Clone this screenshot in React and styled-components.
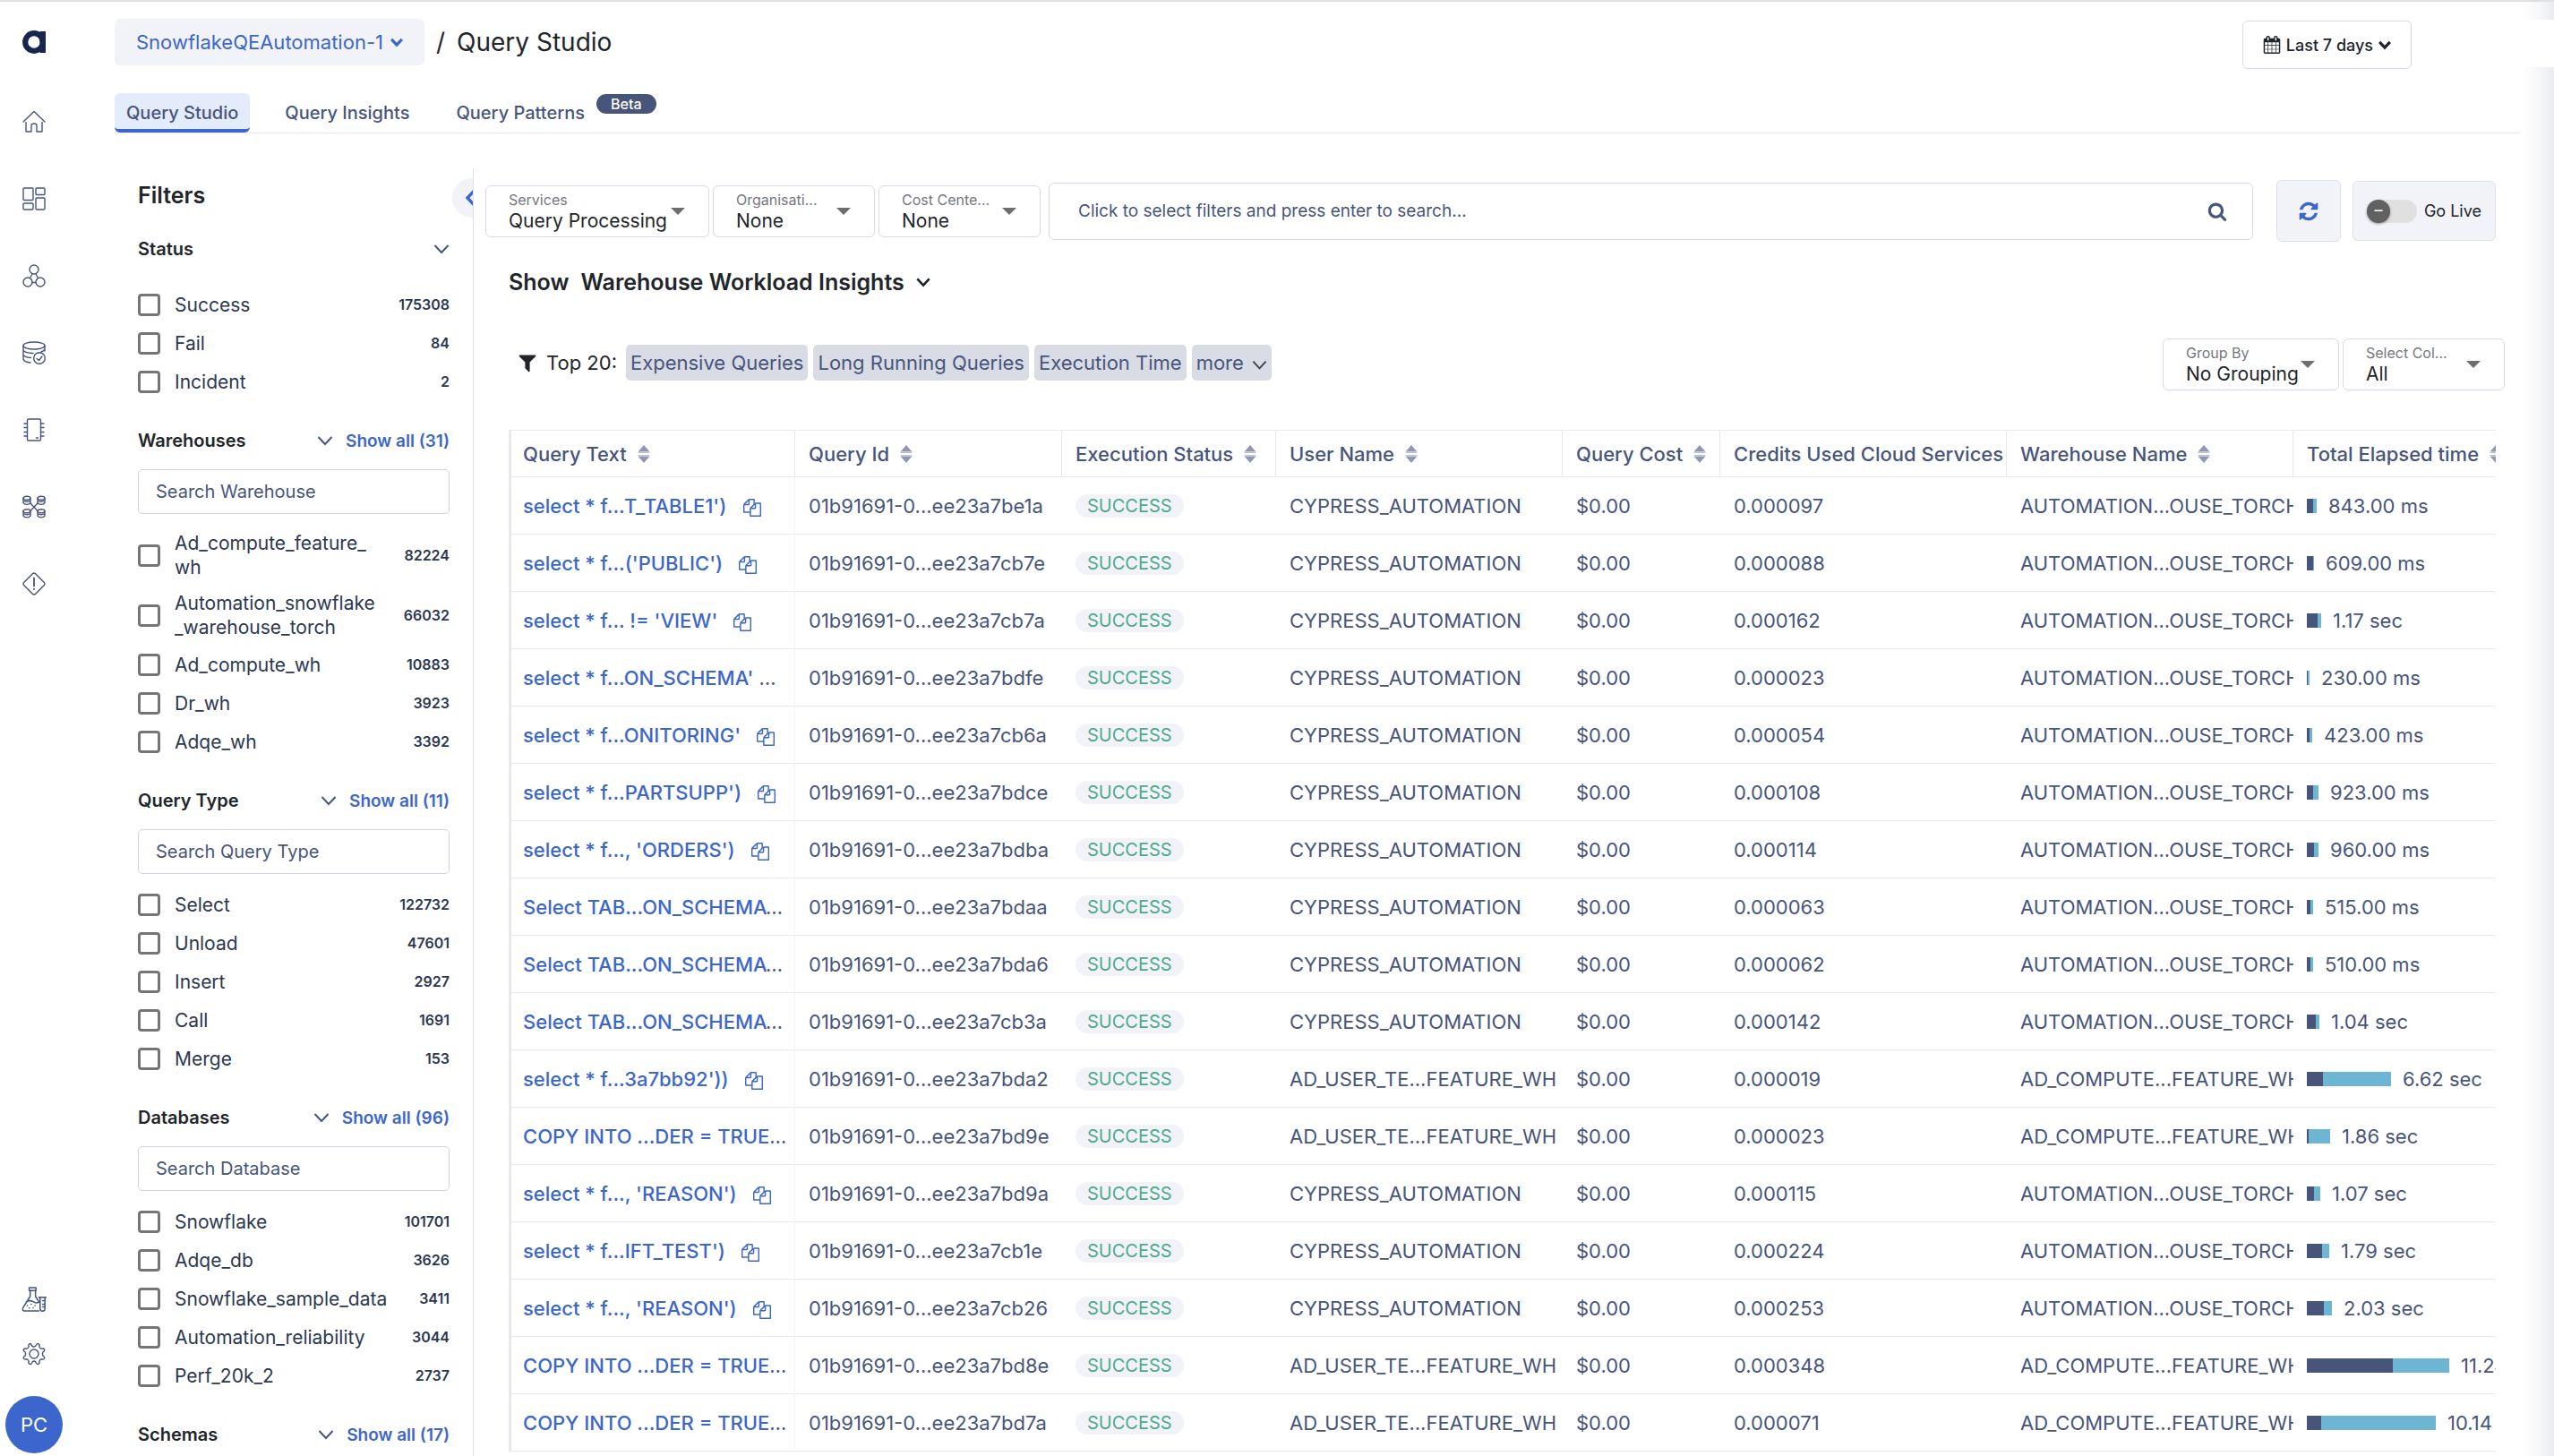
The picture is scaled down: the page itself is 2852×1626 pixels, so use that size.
import React, { useState } from 'react';
import styled, { createGlobalStyle } from 'styled-components';

const colors = {
  text: '#212529',
  slate: '#47557b',
  label: '#2c3750',
  blue: '#3c66cb',
  border: '#d8dae5',
  line: '#e8e9ef',
  panel: '#f2f3f8',
  chip: '#d9dbe5',
  green: '#4fa98b',
  sky: '#6cb5d3',
};

const GlobalStyle = createGlobalStyle`
  * {
    box-sizing: border-box;
  }

  body {
    margin: 0;
    background: #fff;
    color: ${colors.text};
    font-family: Inter, 'Liberation Sans', sans-serif;
    font-size: 22px;
  }

  button, input, select {
    font: inherit;
    color: inherit;
    margin: 0;
  }

  button {
    cursor: pointer;
  }
`;

const Page = styled.div`
  position: relative;
  display: flex;
  height: 100vh;
  overflow: hidden;
  border-top: 2px solid #e0e0e0;
`;

const EdgeShade = styled.div`
  position: absolute;
  top: 0;
  right: 0;
  bottom: 0;
  width: 36px;
  pointer-events: none;
  background:
    linear-gradient(#fff, #fff) 0 20px / 100% 53px no-repeat,
    linear-gradient(to right, #fff, #f8f8fa 50%, #e9ebee);
`;

/* Sidebar */

const Sidebar = styled.nav`
  display: flex;
  flex-direction: column;
  align-items: center;
  flex: none;
  width: 76px;
  padding: 32px 0 3px;
`;

const SideLink = styled.a`
  display: flex;
  flex: none;
  color: ${colors.slate};
  margin-bottom: ${props => props.$gap || 60}px;
`;

const SideSpacer = styled.div`
  flex: 1;
`;

const Avatar = styled.button`
  flex: none;
  width: 64px;
  height: 64px;
  border: none;
  border-radius: 50%;
  background: ${colors.blue};
  color: #fff;
  font-size: 22px;
  padding: 0;
`;

/* Header */

const Main = styled.main`
  display: flex;
  flex-direction: column;
  flex: 1;
  min-width: 0;
  padding: 0 39px 0 52px;
`;

const Header = styled.header`
  display: flex;
  align-items: flex-start;
  justify-content: space-between;
  height: 102px;
  padding: 19px 120px 0 0;
`;

const Crumbs = styled.div`
  display: flex;
  align-items: center;
  gap: 13px;
  font-size: 28px;
`;

const SourceButton = styled.button`
  display: flex;
  align-items: center;
  gap: 8px;
  height: 52px;
  padding: 0 24px;
  border: none;
  border-radius: 6px;
  background: ${colors.panel};
  color: ${colors.blue};
  font-size: 22px;
`;

const PageTitle = styled.h1`
  margin: 0;
  font-size: 28px;
  font-weight: 400;
`;

const DateButton = styled.button`
  display: flex;
  align-items: center;
  gap: 6px;
  height: 54px;
  margin-top: 2px;
  padding: 0 22px;
  border: 1px solid ${colors.border};
  border-radius: 6px;
  background: #fff;
  font-size: 18px;
  font-weight: 500;
`;

const Tabs = styled.nav`
  display: flex;
  flex: none;
  gap: 26px;
  border-bottom: 1px solid ${colors.line};
`;

const Tab = styled.a`
  display: flex;
  align-items: center;
  gap: 13px;
  height: 44px;
  padding: 4px 13px 0;
  border-radius: 6px;
  border-bottom: 4px solid ${props => (props.$active ? colors.blue : 'transparent')};
  background: ${props => (props.$active ? '#e4ebfb' : 'transparent')};
  color: ${colors.slate};
  font-size: 20px;
  font-weight: 500;
  text-decoration: none;
`;

const Beta = styled.span`
  align-self: flex-start;
  margin-top: -3px;
  padding: 0 16px;
  border-radius: 11px;
  background: ${colors.slate};
  color: #fff;
  font-size: 16px;
  line-height: 22px;
`;

const Body = styled.div`
  display: flex;
  flex: 1;
  min-height: 0;
  margin-top: 39px;
`;

/* Filters */

const FilterPanel = styled.aside`
  position: relative;
  flex: none;
  width: 401px;
  padding: 15px 26px 0;
  border-right: 1px solid #dcdee4;
  overflow: hidden;
`;

const CollapseButton = styled.button`
  position: absolute;
  top: 11px;
  right: 0;
  display: flex;
  align-items: center;
  width: 23px;
  height: 44px;
  padding: 0 0 0 12px;
  border: none;
  border-radius: 22px 0 0 22px;
  background: ${colors.panel};
  color: ${colors.blue};
  overflow: hidden;

  svg {
    flex: none;
  }
`;

const FilterTitle = styled.h2`
  margin: 0 0 30px;
  font-size: 25px;
  font-weight: 600;
  line-height: 30px;
`;

const FilterGroup = styled.section`
  margin-bottom: 36px;
`;

const GroupHeader = styled.div`
  display: flex;
  align-items: center;
  gap: 14px;
  height: 30px;

  h3 {
    flex: 1;
    margin: 0;
    font-size: 20px;
    font-weight: 600;
  }
`;

const IconButton = styled.button`
  display: flex;
  padding: 0;
  border: none;
  background: none;
  color: ${colors.slate};
`;

const ShowAll = styled.a`
  color: ${colors.blue};
  font-size: 19px;
  font-weight: 600;
  text-decoration: none;
`;

const FilterSearch = styled.input`
  display: block;
  width: 100%;
  height: 50px;
  margin-top: 17px;
  padding: 0 19px;
  border: 1px solid #cfd3dc;
  border-radius: 5px;
  font-size: 20px;

  &::placeholder {
    color: ${colors.slate};
    opacity: 1;
  }
`;

const OptionList = styled.div`
  display: flex;
  flex-direction: column;
  gap: 13px;
  margin-top: ${props => (props.$plain ? 32 : 19)}px;
`;

const Option = styled.label`
  display: flex;
  align-items: center;
  min-height: 30px;
  color: ${colors.label};
  font-size: 21px;
  line-height: 27px;
  cursor: pointer;
`;

const OptionName = styled.span`
  flex: 1;
  margin: 0 24px 0 16px;
  overflow-wrap: anywhere;
`;

const OptionCount = styled.span`
  font-size: 16px;
  font-weight: 600;
`;

const Checkbox = styled.input.attrs({ type: 'checkbox' })`
  appearance: none;
  flex: none;
  width: 25px;
  height: 25px;
  border: 3px solid #757575;
  border-radius: 4px;
  background: #fff;

  &:checked {
    background: ${colors.blue};
    border-color: ${colors.blue};
  }
`;

/* Content */

const Content = styled.div`
  flex: 1;
  min-width: 0;
  padding: 13px 16px 0 13px;
`;

const Toolbar = styled.div`
  display: flex;
  align-items: center;
  gap: 4px;
  margin-right: 10px;
`;

const FieldBox = styled.div`
  display: flex;
  align-items: center;
  flex: none;
  width: ${props => props.$width}px;
  height: 58px;
  padding: 0 26px 0 25px;
  border: 1px solid ${colors.border};
  border-radius: 6px;
  background: #fff;
`;

const FieldText = styled.div`
  display: flex;
  flex-direction: column;
  flex: 1;
  min-width: 0;

  label {
    color: #75777c;
    font-size: 16px;
    line-height: 22px;
  }

  select {
    width: 100%;
    padding: 0;
    border: none;
    background: none;
    appearance: none;
    color: ${colors.text};
    font-size: 21px;
    line-height: 26px;
  }
`;

const Caret = styled.span`
  flex: none;
  border: 8px solid transparent;
  border-top-color: #6e6e6e;
  border-bottom: none;
`;

const SearchBox = styled.div`
  display: flex;
  align-items: center;
  flex: 1;
  height: 64px;
  margin: 0 22px 0 5px;
  padding: 0 28px 0 32px;
  border: 1px solid ${colors.border};
  border-radius: 6px;

  input {
    flex: 1;
    min-width: 0;
    padding: 0;
    border: none;
    outline: none;
    background: none;
    font-size: 19px;
  }

  input::placeholder {
    color: ${colors.slate};
    opacity: 1;
  }
`;

const RefreshButton = styled.button`
  display: flex;
  align-items: center;
  justify-content: center;
  width: 72px;
  height: 69px;
  margin-right: 9px;
  border: 1px solid #dfe2ea;
  border-radius: 6px;
  background: ${colors.panel};
  color: ${colors.blue};
`;

const LiveToggle = styled.label`
  display: flex;
  align-items: center;
  justify-content: space-between;
  width: 160px;
  height: 67px;
  padding: 0 15px;
  border: 1px solid #dfe2ea;
  border-radius: 6px;
  background: ${colors.panel};
  font-size: 18px;
  cursor: pointer;
`;

const Switch = styled.input.attrs({ type: 'checkbox', role: 'switch' })`
  appearance: none;
  display: flex;
  align-items: center;
  width: 56px;
  height: 26px;
  margin: 0;
  border-radius: 13px;
  background: #e0e0e0;

  &::before {
    content: '–';
    width: 26px;
    height: 26px;
    border-radius: 50%;
    background: #616161;
    box-shadow: 0 1px 3px rgba(0, 0, 0, 0.4);
    color: #fff;
    line-height: 24px;
    text-align: center;
  }

  &:checked {
    justify-content: flex-end;
  }
`;

const InsightsTitle = styled.h2`
  display: flex;
  align-items: center;
  gap: 13px;
  height: 36px;
  margin: 27px 0 0 26px;
  font-size: 25px;
  font-weight: 600;

  button {
    display: flex;
    align-items: center;
    gap: 13px;
    padding: 0;
    border: none;
    background: none;
  }
`;

const QuickRow = styled.div`
  display: flex;
  align-items: center;
  justify-content: space-between;
  height: 58px;
  margin: 45px 0 44px 26px;
`;

const QuickFilters = styled.div`
  display: flex;
  align-items: center;
  gap: 6px;
  padding: 0 0 4px 9px;
`;

const QuickLabel = styled.span`
  display: flex;
  align-items: center;
  gap: 9px;
  margin-right: 4px;
`;

const Chip = styled.button`
  display: flex;
  align-items: center;
  gap: 9px;
  height: 40px;
  padding: 0 5px;
  border: none;
  border-radius: 5px;
  background: ${colors.chip};
  color: ${colors.slate};
  font-size: 22px;

  svg {
    color: #3b4153;
    margin-top: 4px;
  }
`;

const FieldPair = styled.div`
  display: flex;
  gap: 4px;
`;

/* Table */

const TableWrap = styled.div`
  margin: 0 10px 0 26px;
  overflow: hidden;
`;

const Table = styled.table`
  width: 2313px;
  table-layout: fixed;
  border-collapse: separate;
  border-spacing: 0;
  border-left: 3px solid ${colors.line};
  color: ${colors.slate};
`;

const Th = styled.th`
  height: 53px;
  padding: 0 0 0 15px;
  border-top: 1px solid ${colors.line};
  border-bottom: 1px solid ${colors.line};
  border-right: 1px solid ${colors.line};
  font-size: 22px;
  font-weight: 500;
  text-align: left;
  white-space: nowrap;
  overflow: hidden;

  &:first-child {
    padding-left: 13px;
  }
`;

const ThInner = styled.div`
  display: flex;
  align-items: center;
  gap: 12px;

  svg {
    flex: none;
  }
`;

const Td = styled.td`
  height: 64px;
  padding: 0 0 0 15px;
  border-bottom: 1px solid ${colors.line};
  font-size: 22px;
  white-space: nowrap;
  overflow: hidden;
`;

const QueryTd = styled(Td)`
  padding: 0 8px 0 13px;
  border-right: 1px solid #f4f4f8;
  text-overflow: ellipsis;

  a {
    color: ${colors.blue};
    font-weight: 500;
    text-decoration: none;
  }
`;

const CopyButton = styled.button`
  display: inline-flex;
  margin-left: 12px;
  padding: 0;
  border: none;
  background: none;
  color: ${colors.blue};
  vertical-align: middle;
`;

const Badge = styled.span`
  display: inline-block;
  padding: 0 13px;
  border-radius: 13px;
  background: ${colors.panel};
  color: ${colors.green};
  font-size: 20px;
  line-height: 26px;
`;

const Elapsed = styled.div`
  display: flex;
  align-items: center;
`;

const Segment = styled.span`
  flex: none;
  height: 16px;
  background: ${props => props.$color};
`;

const ElapsedText = styled.span`
  margin-left: 13px;
`;

/* Icons */

const Glyph = ({ d, size }) => (
  <svg width={size} height={size} viewBox="0 0 1792 1792" fill="currentColor" aria-hidden="true">
    <path d={d} />
  </svg>
);

const glyphs = {
  copy: 'M1696 384q40 0 68 28t28 68v1216q0 40-28 68t-68 28h-960q-40 0-68-28t-28-68v-288h-544q-40 0-68-28t-28-68v-672q0-40 20-88t48-76l408-408q28-28 76-48t88-20h416q40 0 68 28t28 68v328q68-40 128-40h416zm-544 213l-299 299h299v-299zm-640-384l-299 299h299v-299zm196 647l316-316v-416h-384v416q0 40-28 68t-68 28h-416v640h512v-256q0-40 20-88t48-76zm956 804v-1152h-384v416q0 40-28 68t-68 28h-416v640h896z',
  refresh: 'M1639 1056q0 5-1 7-64 268-268 434.5t-478 166.5q-146 0-282.5-55t-243.5-157l-129 129q-19 19-45 19t-45-19-19-45v-448q0-26 19-45t45-19h448q26 0 45 19t19 45-19 45l-137 137q71 66 161 102t187 36q134 0 250-65t186-179q11-17 53-117 8-23 30-23h192q13 0 22.5 9.5t9.5 22.5zm25-800v448q0 26-19 45t-45 19h-448q-26 0-45-19t-19-45 19-45l138-138q-148-137-349-137-134 0-250 65t-186 179q-11 17-53 117-8 23-30 23h-199q-13 0-22.5-9.5t-9.5-22.5v-7q65-268 270-434.5t480-166.5q146 0 284 55.5t245 156.5l130-129q19-19 45-19t45 19 19 45z',
  calendar: 'M192 1664h288v-288h-288v288zm352 0h320v-288h-320v288zm-352-352h288v-320h-288v320zm352 0h320v-320h-320v320zm-352-384h288v-288h-288v288zm736 736h320v-288h-320v288zm-384-736h320v-288h-320v288zm768 736h288v-288h-288v288zm-384-352h320v-320h-320v320zm-352-864v-288q0-13-9.5-22.5t-22.5-9.5h-64q-13 0-22.5 9.5t-9.5 22.5v288q0 13 9.5 22.5t22.5 9.5h64q13 0 22.5-9.5t9.5-22.5zm736 864h288v-320h-288v320zm-384-384h320v-288h-320v288zm384 0h288v-288h-288v288zm32-480v-288q0-13-9.5-22.5t-22.5-9.5h-64q-13 0-22.5 9.5t-9.5 22.5v288q0 13 9.5 22.5t22.5 9.5h64q13 0 22.5-9.5t9.5-22.5zm384-64v1280q0 52-38 90t-90 38h-1408q-52 0-90-38t-38-90v-1280q0-52 38-90t90-38h128v-96q0-66 47-113t113-47h64q66 0 113 47t47 113v96h384v-96q0-66 47-113t113-47h64q66 0 113 47t47 113v96h128q52 0 90 38t38 90z',
  search: 'M1216 832q0-185-131.5-316.5t-316.5-131.5-316.5 131.5-131.5 316.5 131.5 316.5 316.5 131.5 316.5-131.5 131.5-316.5zm512 832q0 52-38 90t-90 38q-54 0-90-38l-343-342q-179 124-399 124-143 0-273.5-55.5t-225-150-150-225-55.5-273.5 55.5-273.5 150-225 225-150 273.5-55.5 273.5 55.5 225 150 150 225 55.5 273.5q0 220-124 399l343 343q37 37 37 90z',
  filter: 'M1595 295q17 41-14 70l-493 493v742q0 42-39 59-13 5-25 5-27 0-45-19l-256-256q-19-19-19-45v-486l-493-493q-31-29-14-70 17-39 59-39h1280q42 0 59 39z',
};

const Chevron = ({ width = 18, stroke = 2 }) => (
  <svg width={width} height={width} viewBox="0 0 18 18" fill="none" stroke="currentColor" strokeWidth={stroke} aria-hidden="true">
    <path d="M1.5 5 L9 13 L16.5 5" />
  </svg>
);

const SortIcon = () => (
  <svg width="14" height="20" viewBox="0 0 14 20" fill="#8f98b0" aria-hidden="true">
    <path d="M7 0 L13.5 7.5 H0.5 Z M7 20 L13.5 12.5 H0.5 Z" />
    <path d="M0.5 8 h13 v1 h-13 z M0.5 11 h13 v1 h-13 z" opacity="0.6" />
  </svg>
);

const SideIcon = ({ children, size = 26 }) => (
  <svg width={size} height={size} viewBox="0 0 26 26" fill="none" stroke="currentColor" strokeWidth="1.4" strokeLinejoin="round" strokeLinecap="round" aria-hidden="true">
    {children}
  </svg>
);

const Logo = () => (
  <svg width="26" height="26" viewBox="0 0 26 26" aria-hidden="true">
    <circle cx="13" cy="13" r="9.8" fill="none" stroke="#16264f" strokeWidth="6.2" />
    <path d="M19.5 1 H26 V25 H19.5 Z" fill="#16264f" />
  </svg>
);

const sideItems = [
  {
    name: 'Home',
    icon: (
      <SideIcon>
        <path d="M1 13 L13 1.5 L25 13 M4 13.5 V24 H10 V17 Q10 15 13 15 Q16 15 16 17 V24 H22 V13.5" />
      </SideIcon>
    ),
  },
  {
    name: 'Dashboards',
    icon: (
      <SideIcon>
        <rect x="1" y="1" width="11" height="13.5" rx="1" />
        <rect x="15" y="1" width="10" height="7.5" rx="1" />
        <rect x="1" y="18" width="11" height="7" rx="1" />
        <rect x="15" y="12" width="10" height="13" rx="1" />
      </SideIcon>
    ),
  },
  {
    name: 'Clusters',
    icon: (
      <SideIcon>
        <circle cx="13" cy="6" r="5" />
        <circle cx="6" cy="20" r="5" />
        <circle cx="20" cy="20" r="5" />
        <path d="M11 11 L8.5 15.5 M15 11 L17.5 15.5 M11 20.5 H15" />
      </SideIcon>
    ),
  },
  {
    name: 'Data quality',
    icon: (
      <SideIcon>
        <ellipse cx="13" cy="5" rx="12" ry="4" />
        <path d="M1 5 V20 Q2 23.5 9 24 M25 5 V11 M1 10 Q2 13 12 13.5 M1 15 Q2 18 9.5 18.5 M25 9 Q24 11 21 12" />
        <circle cx="19" cy="19" r="6.3" />
        <path d="M16 19.5 L18.5 21.5 L22 17" />
      </SideIcon>
    ),
  },
  {
    name: 'Compute',
    icon: (
      <SideIcon>
        <rect x="5.5" y="1" width="15" height="24" rx="1.5" />
        <path d="M2 6 H5.5 M2 10.5 H5.5 M2 15.5 H5.5 M2 20 H5.5 M20.5 6 H24 M20.5 10.5 H24 M20.5 15.5 H24 M20.5 20 H24 M15.5 22 H17.5" />
      </SideIcon>
    ),
  },
  {
    name: 'Pipelines',
    icon: (
      <SideIcon>
        {[[1, 1], [17, 1], [1, 15.5], [17, 15.5]].map(([x, y]) => (
          <g key={`${x}-${y}`} transform={`translate(${x} ${y})`}>
            <ellipse cx="4" cy="2.2" rx="4" ry="2" />
            <path d="M0 2.2 V7.4 Q1 9.4 4 9.4 Q7 9.4 8 7.4 V2.2 M0 5 Q4 7.5 8 5" />
          </g>
        ))}
        <path d="M9 9 L17 17.5 M17 9 L9 17.5" />
      </SideIcon>
    ),
  },
  {
    name: 'Alerts',
    icon: (
      <SideIcon>
        <path d="M11.6 1.6 Q13 0.4 14.4 1.6 L24.4 11.6 Q25.6 13 24.4 14.4 L14.4 24.4 Q13 25.6 11.6 24.4 L1.6 14.4 Q0.4 13 1.6 11.6 Z" />
        <path d="M13 6.5 V15.5 M13 18.6 V19" strokeWidth="1.8" />
      </SideIcon>
    ),
  },
];

/* Data */

// \u200b marks where a long name may wrap
const filterGroups = [
  {
    title: 'Warehouses',
    total: 31,
    search: 'Search Warehouse',
    options: [
      ['Ad_compute_feature_\u200bwh', 82224],
      ['Automation_snowflake\u200b_warehouse_torch', 66032],
      ['Ad_compute_wh', 10883],
      ['Dr_wh', 3923],
      ['Adqe_wh', 3392],
    ],
  },
  {
    title: 'Query Type',
    total: 11,
    search: 'Search Query Type',
    options: [
      ['Select', 122732],
      ['Unload', 47601],
      ['Insert', 2927],
      ['Call', 1691],
      ['Merge', 153],
    ],
  },
  {
    title: 'Databases',
    total: 96,
    search: 'Search Database',
    options: [
      ['Snowflake', 101701],
      ['Adqe_db', 3626],
      ['Snowflake_sample_data', 3411],
      ['Automation_reliability', 3044],
      ['Perf_20k_2', 2737],
    ],
  },
  { title: 'Schemas', total: 17, search: 'Search Schema', options: [] },
];

const statusOptions = [
  ['Success', 175308],
  ['Fail', 84],
  ['Incident', 2],
];

const columns = [
  { title: 'Query Text', width: 317 },
  { title: 'Query Id', width: 298 },
  { title: 'Execution Status', width: 239 },
  { title: 'User Name', width: 320 },
  { title: 'Query Cost', width: 176 },
  { title: 'Credits Used Cloud Services', width: 320 },
  { title: 'Warehouse Name', width: 320 },
  { title: 'Total Elapsed time', width: 320 },
];

const cypress = { user: 'CYPRESS_AUTOMATION', warehouse: 'AUTOMATION...OUSE_TORCH' };
const feature = { user: 'AD_USER_TE...FEATURE_WH', warehouse: 'AD_COMPUTE...FEATURE_WH' };

// bars: [compile, execute] widths in px
const rows = [
  { text: "select * f...T_TABLE1')", id: '7be1a', credits: '0.000097', bars: [7, 4], time: '843.00 ms', ...cypress },
  { text: "select * f...('PUBLIC')", id: '7cb7e', credits: '0.000088', bars: [7, 1], time: '609.00 ms', ...cypress },
  { text: "select * f... != 'VIEW'", id: '7cb7a', credits: '0.000162', bars: [12, 4], time: '1.17 sec', ...cypress },
  { text: "select * f...ON_SCHEMA'", id: '7bdfe', credits: '0.000023', bars: [1, 2], time: '230.00 ms', ...cypress },
  { text: "select * f...ONITORING'", id: '7cb6a', credits: '0.000054', bars: [3, 3], time: '423.00 ms', ...cypress },
  { text: "select * f...PARTSUPP')", id: '7bdce', credits: '0.000108', bars: [7, 6], time: '923.00 ms', ...cypress },
  { text: "select * f..., 'ORDERS')", id: '7bdba', credits: '0.000114', bars: [8, 5], time: '960.00 ms', ...cypress },
  { text: "Select TAB...ON_SCHEMA'", id: '7bdaa', credits: '0.000063', bars: [4, 3], time: '515.00 ms', ...cypress },
  { text: "Select TAB...ON_SCHEMA'", id: '7bda6', credits: '0.000062', bars: [4, 3], time: '510.00 ms', ...cypress },
  { text: "Select TAB...ON_SCHEMA'", id: '7cb3a', credits: '0.000142', bars: [10, 4], time: '1.04 sec', ...cypress },
  { text: "select * f...3a7bb92'))", id: '7bda2', credits: '0.000019', bars: [18, 76], time: '6.62 sec', ...feature },
  { text: 'COPY INTO ...DER = TRUE', id: '7bd9e', credits: '0.000023', bars: [2, 24], time: '1.86 sec', ...feature },
  { text: "select * f..., 'REASON')", id: '7bd9a', credits: '0.000115', bars: [8, 7], time: '1.07 sec', ...cypress },
  { text: "select * f...IFT_TEST')", id: '7cb1e', credits: '0.000224', bars: [17, 8], time: '1.79 sec', ...cypress },
  { text: "select * f..., 'REASON')", id: '7cb26', credits: '0.000253', bars: [19, 9], time: '2.03 sec', ...cypress },
  { text: 'COPY INTO ...DER = TRUE', id: '7bd8e', credits: '0.000348', bars: [96, 63], time: '11.24 sec', ...feature },
  { text: 'COPY INTO ...DER = TRUE', id: '7bd7a', credits: '0.000071', bars: [16, 128], time: '10.14 sec', ...feature },
];

const CheckOption = ({ name, count }) => (
  <Option>
    <Checkbox />
    <OptionName>{name}</OptionName>
    <OptionCount>{count}</OptionCount>
  </Option>
);

const Field = ({ id, label, value, width }) => (
  <FieldBox $width={width}>
    <FieldText>
      <label htmlFor={id}>{label}</label>
      <select id={id} defaultValue={value}>
        <option>{value}</option>
      </select>
    </FieldText>
    <Caret />
  </FieldBox>
);

const Filters = () => (
  <FilterPanel>
    <CollapseButton aria-label="Collapse filters">
      <svg width="18" height="18" viewBox="0 0 18 18" fill="none" stroke="currentColor" strokeWidth="3.4">
        <path d="M12 1.5 L5 9 L12 16.5" />
      </svg>
    </CollapseButton>
    <FilterTitle>Filters</FilterTitle>
    <FilterGroup>
      <GroupHeader>
        <h3>Status</h3>
        <IconButton aria-label="Toggle Status"><Chevron /></IconButton>
      </GroupHeader>
      <OptionList $plain>
        {statusOptions.map(([name, count]) => (
          <CheckOption key={name} name={name} count={count} />
        ))}
      </OptionList>
    </FilterGroup>
    {filterGroups.map(group => (
      <FilterGroup key={group.title}>
        <GroupHeader>
          <h3>{group.title}</h3>
          <IconButton aria-label={`Toggle ${group.title}`}><Chevron /></IconButton>
          <ShowAll href="#">Show all ({group.total})</ShowAll>
        </GroupHeader>
        <FilterSearch placeholder={group.search} aria-label={group.search} />
        <OptionList>
          {group.options.map(([name, count]) => (
            <CheckOption key={name} name={name} count={count} />
          ))}
        </OptionList>
      </FilterGroup>
    ))}
  </FilterPanel>
);

const QueryTable = () => (
  <TableWrap>
    <Table>
      <colgroup>
        {columns.map(column => (
          <col key={column.title} width={column.width} />
        ))}
      </colgroup>
      <thead>
        <tr>
          {columns.map(column => (
            <Th key={column.title}>
              <ThInner>
                {column.title}
                <SortIcon />
              </ThInner>
            </Th>
          ))}
        </tr>
      </thead>
      <tbody>
        {rows.map(row => (
          <tr key={row.id}>
            <QueryTd>
              <a href="#">{row.text}</a>{' '}
              <CopyButton aria-label="Copy query"><Glyph d={glyphs.copy} size={20} /></CopyButton>
            </QueryTd>
            <Td>01b91691-0...ee23a{row.id}</Td>
            <Td><Badge>SUCCESS</Badge></Td>
            <Td>{row.user}</Td>
            <Td>$0.00</Td>
            <Td>{row.credits}</Td>
            <Td>{row.warehouse}</Td>
            <Td>
              <Elapsed>
                <Segment $color={colors.slate} style={{ width: row.bars[0] }} />
                <Segment $color={colors.sky} style={{ width: row.bars[1] }} />
                <ElapsedText>{row.time}</ElapsedText>
              </Elapsed>
            </Td>
          </tr>
        ))}
      </tbody>
    </Table>
  </TableWrap>
);

const App = () => {
  const [live, setLive] = useState(false);

  return (
    <>
      <GlobalStyle />
      <Page>
        <Sidebar>
          <SideLink href="#" $gap={63} aria-label="Acceldata"><Logo /></SideLink>
          {sideItems.map(item => (
            <SideLink key={item.name} href="#" aria-label={item.name}>{item.icon}</SideLink>
          ))}
          <SideSpacer />
          <SideLink href="#" $gap={34} aria-label="Labs">
            <SideIcon size={28}>
              <path d="M8 1 H15 V4 H8 Z M9 4 V10 L1.5 22 Q0.5 25 3 25 H18 M14.5 4 V10 L18 15.5 M5 15.5 Q9 13.5 12 15.5 T18 16" />
              <path d="M18 11 H25.5 M19.3 11 V23 Q19.5 25.3 21.8 25.3 Q24.2 25.3 24.3 23 V11 M22 14.5 H24 M22 18 H24 M22 21 H24" />
              <path d="M6 19.5 H6.2 M10 18 H10.2 M14 19.5 H14.2 M8 22 H8.2 M12 21.8 H12.2" />
            </SideIcon>
          </SideLink>
          <SideLink href="#" $gap={34} aria-label="Settings">
            <SideIcon>
              <circle cx="13" cy="13" r="5" />
              <path d="M10.6 4 Q11.4 5 13 5 Q14.6 5 15.4 3 Q16.4 0.8 18.2 1.8 Q19.6 2.6 18.8 4.6 Q19.4 7 21.4 7.2 Q23.8 6.4 24.6 8 Q25.2 9.8 23.2 10.6 Q21.6 13 23.2 15.4 Q25.2 16.2 24.6 18 Q23.8 19.6 21.4 18.8 Q19.4 19 18.8 21.4 Q19.6 23.4 18.2 24.2 Q16.4 25.2 15.4 23 Q14.6 21 13 21 Q11.4 21 10.6 23 Q9.6 25.2 7.8 24.2 Q6.4 23.4 7.2 21.4 Q6.6 19 4.6 18.8 Q2.2 19.6 1.4 18 Q0.8 16.2 2.8 15.4 Q4.4 13 2.8 10.6 Q0.8 9.8 1.4 8 Q2.2 6.4 4.6 7.2 Q6.6 7 7.2 4.6 Q6.4 2.6 7.8 1.8 Q9.6 0.8 10.6 4 Z" />
            </SideIcon>
          </SideLink>
          <Avatar>PC</Avatar>
        </Sidebar>

        <Main>
          <Header>
            <Crumbs>
              <SourceButton>
                SnowflakeQEAutomation-1
                <Chevron width={14} stroke={4} />
              </SourceButton>
              <span>/</span>
              <PageTitle>Query Studio</PageTitle>
            </Crumbs>
            <DateButton>
              <Glyph d={glyphs.calendar} size={20} />
              Last 7 days
              <Chevron width={14} stroke={4} />
            </DateButton>
          </Header>

          <Tabs>
            <Tab href="#" $active>Query Studio</Tab>
            <Tab href="#">Query Insights</Tab>
            <Tab href="#">
              Query Patterns
              <Beta>Beta</Beta>
            </Tab>
          </Tabs>

          <Body>
            <Filters />
            <Content>
              <Toolbar>
                <Field id="services" label="Services" value="Query Processing" width={250} />
                <Field id="organisation" label="Organisati..." value="None" width={181} />
                <Field id="cost-center" label="Cost Cente..." value="None" width={181} />
                <SearchBox>
                  <input
                    aria-label="Search queries"
                    placeholder="Click to select filters and press enter to search..."
                  />
                  <IconButton aria-label="Search"><Glyph d={glyphs.search} size={22} /></IconButton>
                </SearchBox>
                <RefreshButton aria-label="Refresh"><Glyph d={glyphs.refresh} size={24} /></RefreshButton>
                <LiveToggle>
                  <Switch checked={live} onChange={() => setLive(!live)} />
                  Go Live
                </LiveToggle>
              </Toolbar>

              <InsightsTitle>
                Show
                <button>
                  Warehouse Workload Insights
                  <Chevron width={16} stroke={3} />
                </button>
              </InsightsTitle>

              <QuickRow>
                <QuickFilters>
                  <QuickLabel>
                    <Glyph d={glyphs.filter} size={24} />
                    Top 20:
                  </QuickLabel>
                  <Chip>Expensive Queries</Chip>
                  <Chip>Long Running Queries</Chip>
                  <Chip>Execution Time</Chip>
                  <Chip>
                    more
                    <Chevron width={17} stroke={2} />
                  </Chip>
                </QuickFilters>
                <FieldPair>
                  <Field id="group-by" label="Group By" value="No Grouping" width={197} />
                  <Field id="columns" label="Select Col..." value="All" width={181} />
                </FieldPair>
              </QuickRow>

              <QueryTable />
            </Content>
          </Body>
        </Main>
        <EdgeShade />
      </Page>
    </>
  );
};

export default App;
